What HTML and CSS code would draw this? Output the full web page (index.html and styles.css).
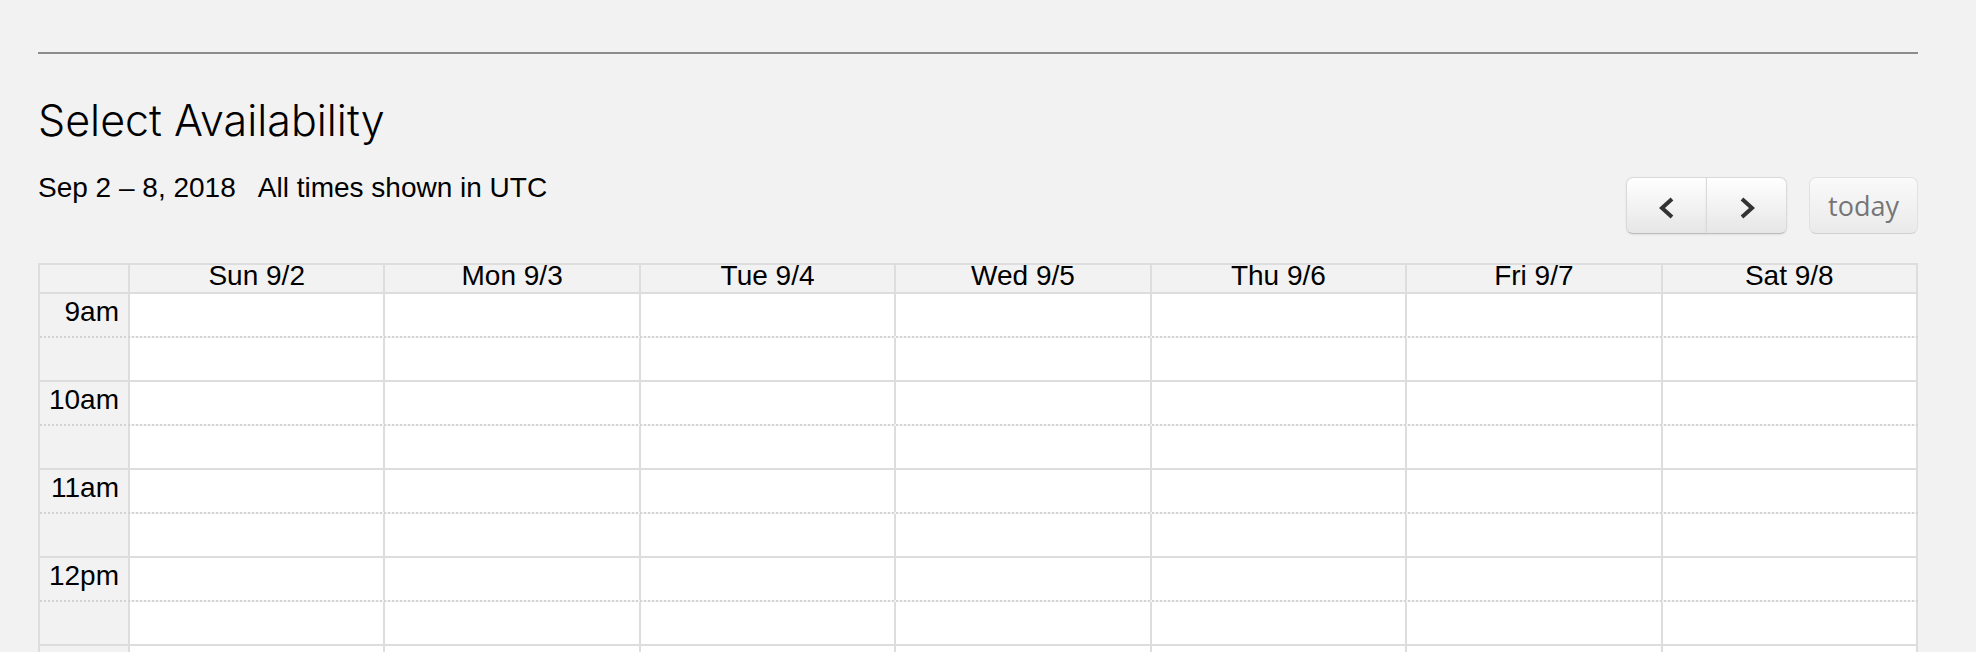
FILE: index.html
```html
<!DOCTYPE html>
<html lang="en">
<head>
    <meta charset="UTF-8">
    <meta name="viewport" content="width=device-width, initial-scale=1.0">
    <title>Select Availability</title>
    <link rel="stylesheet" href="styles.css">
</head>
<body>
    <div class="page">
        <hr class="rule">
        <h2 class="title">Select Availability</h2>

        <!-- Toolbar -->
        <div class="toolbar">
            <div class="range">
                <span>Sep 2 – 8, 2018</span><span class="tz">All times shown in UTC</span>
            </div>
            <div class="nav">
                <div class="btn-group">
                    <button class="btn arrow prev" aria-label="prev">
                        <svg width="20" height="24" viewBox="0 0 20 24"><polyline points="15,3 5,12 15,21"/></svg>
                    </button>
                    <button class="btn arrow next" aria-label="next">
                        <svg width="20" height="24" viewBox="0 0 20 24"><polyline points="5,3 15,12 5,21"/></svg>
                    </button>
                </div>
                <button class="btn today" disabled>today</button>
            </div>
        </div>

        <!-- Week grid -->
        <div class="calendar">
            <div class="cal-head">
                <div class="cell"></div>
                <div class="cell">Sun 9/2</div>
                <div class="cell">Mon 9/3</div>
                <div class="cell">Tue 9/4</div>
                <div class="cell">Wed 9/5</div>
                <div class="cell">Thu 9/6</div>
                <div class="cell">Fri 9/7</div>
                <div class="cell">Sat 9/8</div>
            </div>
            <div class="slot"><div class="axis">9am</div><div></div><div></div><div></div><div></div><div></div><div></div><div></div></div>
            <div class="slot half"><div class="axis"></div><div></div><div></div><div></div><div></div><div></div><div></div><div></div></div>
            <div class="slot"><div class="axis">10am</div><div></div><div></div><div></div><div></div><div></div><div></div><div></div></div>
            <div class="slot half"><div class="axis"></div><div></div><div></div><div></div><div></div><div></div><div></div><div></div></div>
            <div class="slot"><div class="axis">11am</div><div></div><div></div><div></div><div></div><div></div><div></div><div></div></div>
            <div class="slot half"><div class="axis"></div><div></div><div></div><div></div><div></div><div></div><div></div><div></div></div>
            <div class="slot"><div class="axis">12pm</div><div></div><div></div><div></div><div></div><div></div><div></div><div></div></div>
            <div class="slot half"><div class="axis"></div><div></div><div></div><div></div><div></div><div></div><div></div><div></div></div>
            <div class="slot"><div class="axis"></div><div></div><div></div><div></div><div></div><div></div><div></div><div></div></div>
        </div>
    </div>
</body>
</html>
```

FILE: styles.css
```css
/* Theme Colors */
:root {
    --page: #f2f2f2;
    --line: #dddddd;
    --dots: #d4d4d4;
    --text: #000;
}

* {
    box-sizing: border-box;
}

body {
    margin: 0;
    background-color: var(--page);
    color: var(--text);
    font-family: "Liberation Sans", Arial, sans-serif;
    font-size: 28px;
}

.page {
    padding: 52px 58px 0 38px;
}

.rule {
    margin: 0;
    border: 0;
    border-top: 2px solid #8c8c8c;
}

.title {
    margin: 40px 0 0;
    font-family: Inter, "Liberation Sans", sans-serif;
    font-weight: 300;
    font-size: 43px;
    line-height: 52px;
}

/* Toolbar */
.toolbar {
    display: flex;
    justify-content: space-between;
    align-items: flex-start;
    margin-top: 26px;
}

.range {
    line-height: 32px;
}

.tz {
    margin-left: 22px;
}

.nav {
    display: flex;
    gap: 22px;
    margin-top: 5px;
}

.btn-group {
    display: flex;
}

.btn {
    height: 57px;
    padding: 0;
    border: 1px solid;
    border-color: #d9d9d9 #d9d9d9 #bdbdbd;
    border-radius: 7px;
    background-color: #f5f5f5;
    background-image: linear-gradient(to bottom, #fff, #e6e6e6);
    box-shadow: inset 0 1px 0 rgba(255, 255, 255, 0.2), 0 1px 2px rgba(0, 0, 0, 0.08);
    color: #333;
}

.arrow {
    width: 81px;
    display: flex;
    align-items: center;
    justify-content: center;
}

.arrow svg {
    margin-top: 4px;
}

.arrow polyline {
    fill: none;
    stroke: #333;
    stroke-width: 4;
}

.prev {
    border-top-right-radius: 0;
    border-bottom-right-radius: 0;
}

.next {
    margin-left: -1px;
    border-top-left-radius: 0;
    border-bottom-left-radius: 0;
}

.today {
    width: 109px;
    font-family: "Open Sans", sans-serif;
    font-size: 27px;
    opacity: 0.65;
    box-shadow: none;
}

/* Calendar grid */
.calendar {
    border-top: 2px solid var(--line);
    border-left: 2px solid var(--line);
    margin-top: 29px;
}

.cal-head, .slot {
    display: grid;
    grid-template-columns: 90px repeat(7, 1fr);
}

.cal-head .cell {
    height: 27px;
    line-height: 21px;
    text-align: center;
    border-right: 2px solid var(--line);
}

.slot {
    height: 44px;
    border-top: 2px solid var(--line);
}

.slot.half {
    border-top: 2px dotted var(--dots);
}

.slot > div {
    background-color: #fff;
    border-right: 2px solid var(--line);
}

.slot > .axis {
    background-color: transparent;
    text-align: right;
    line-height: 21px;
    padding: 7px 9px 0 0;
}
```
